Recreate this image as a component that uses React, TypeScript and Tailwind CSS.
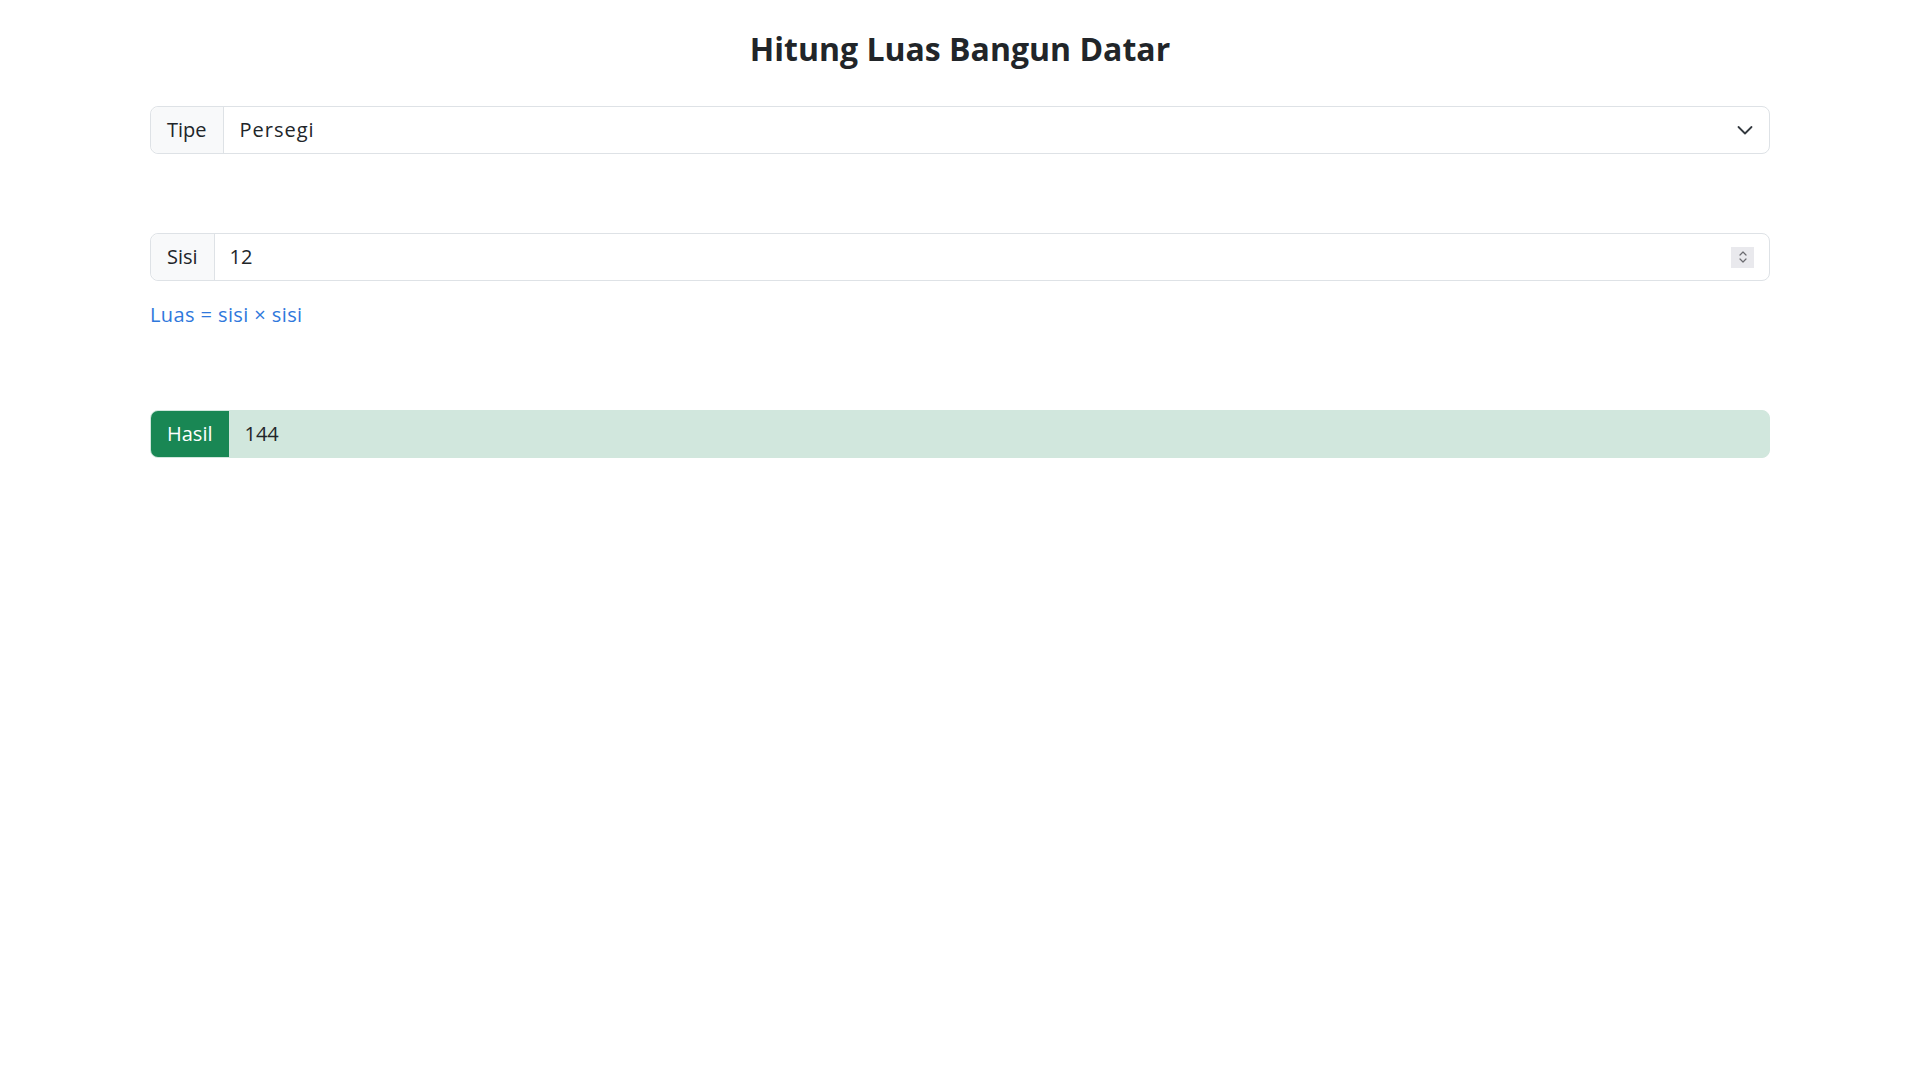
const FONT = "font-['Open_Sans','Noto_Sans',sans-serif]";

function ChevronDown() {
  return (
    <svg width="16" height="16" viewBox="0 0 16 16" fill="none">
      <path d="m1.5 5 6.5 6.5 6.5-6.5" stroke="#343a40" strokeWidth="1.8" strokeLinecap="round" strokeLinejoin="round" />
    </svg>
  );
}

function Spinner() {
  return (
    <div className="flex h-[21px] w-[23px] flex-col items-center justify-center bg-[#e9e9ed]">
      <svg width="10" height="14" viewBox="0 0 10 14" fill="none">
        <path d="M2 5 5 2l3 3" stroke="#6b6b70" strokeWidth="1.2" strokeLinecap="round" strokeLinejoin="round" />
        <path d="m2 9 3 3 3-3" stroke="#6b6b70" strokeWidth="1.2" strokeLinecap="round" strokeLinejoin="round" />
      </svg>
    </div>
  );
}

export default function App() {
  return (
    <div className={`min-h-screen bg-white text-[#212529] ${FONT}`}>
      <div className="mx-auto w-[1620px] pt-[30px]">
        <h2 className="mb-[38px] text-center text-[32px] font-bold leading-[1.2]">Hitung Luas Bangun Datar</h2>

        <div className="flex h-12 rounded-lg border border-[#dee2e6] text-[20px]">
          <span className="flex items-center rounded-l-lg border-r border-[#dee2e6] bg-[#f8f9fa] px-4">Tipe</span>
          <div className="flex flex-1 items-center justify-between pl-4 pr-4">
            <span className="tracking-[1px]">Persegi</span>
            <ChevronDown />
          </div>
        </div>

        <div className="mt-[79px] flex h-12 rounded-lg border border-[#dee2e6] text-[20px]">
          <span className="flex items-center rounded-l-lg border-r border-[#dee2e6] bg-[#f8f9fa] px-4">Sisi</span>
          <div className="flex flex-1 items-center justify-between pl-[15px] pr-[15px]">
            <span>12</span>
            <Spinner />
          </div>
        </div>

        <p className="mt-[19px] text-[20px] leading-[30px] tracking-[0.4px] text-[#2f78dc]">Luas = sisi × sisi</p>

        <div className="mt-[80px] flex h-12 overflow-hidden rounded-lg border border-[#d1e7dd] bg-[#d1e7dd] text-[20px]">
          <span className="flex items-center bg-[#198754] px-4 text-white">Hasil</span>
          <span className="flex items-center px-4">144</span>
        </div>
      </div>
    </div>
  );
}
